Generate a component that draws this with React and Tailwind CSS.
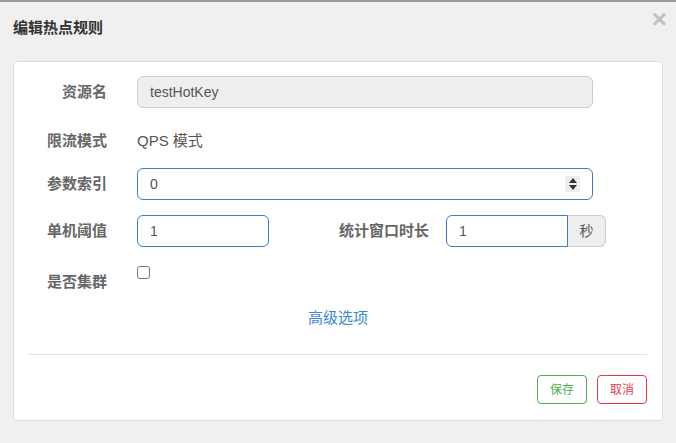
const font = {
  fontFamily: '"Liberation Sans", "Noto Sans CJK SC", sans-serif',
};

const Label = ({ children, className = "" }) => (
  <div
    className={`w-[93px] shrink-0 text-right text-[15px] font-bold text-[#666] ${className}`}
  >
    {children}
  </div>
);

export default function App() {
  return (
    <div
      style={font}
      className="h-[443px] w-[676px] overflow-hidden border-t-2 border-[#9a9a9a] bg-[#f0f0f0]"
    >
      {/* HEADER */}
      <div className="flex h-[59px] items-start justify-between pl-[13px] pr-[9px]">
        <h1 className="mt-[15px] text-[15px] font-bold text-[#333]">编辑热点规则</h1>
        <button className="mt-[4px] text-[26px] font-bold leading-none text-[#c2c2c2]">
          ×
        </button>
      </div>

      {/* BODY */}
      <div className="mx-[13px] h-[360px] rounded-[4px] border border-[#ddd] bg-white pt-[14px]">
        <div className="flex h-[32px] items-center">
          <Label>资源名</Label>
          <div className="ml-[30px] flex h-[32px] w-[456px] items-center rounded-[6px] border border-[#ccc] bg-[#eee] px-[12px] text-[14px] text-[#555]">
            testHotKey
          </div>
        </div>

        <div className="mt-[17px] flex h-[32px] items-center">
          <Label>限流模式</Label>
          <div className="ml-[30px] text-[15px] text-[#555]">QPS 模式</div>
        </div>

        <div className="mt-[11px] flex h-[32px] items-center">
          <Label>参数索引</Label>
          <div className="ml-[30px] flex h-[32px] w-[456px] items-center justify-between rounded-[6px] border border-[#3b7dc0] bg-white pl-[12px] pr-[12px] text-[14px] text-[#555]">
            <span>0</span>
            <span className="flex h-[16px] w-[15px] flex-col items-center justify-center gap-[2px] bg-[#eee]">
              <svg width="8" height="5" viewBox="0 0 8 5">
                <path d="M4 0L8 5H0z" fill="#333" />
              </svg>
              <svg width="8" height="5" viewBox="0 0 8 5">
                <path d="M0 0H8L4 5z" fill="#333" />
              </svg>
            </span>
          </div>
        </div>

        <div className="mt-[15px] flex h-[32px] items-center">
          <Label>单机阈值</Label>
          <div className="ml-[30px] flex h-[32px] w-[132px] items-center rounded-[6px] border border-[#3b7dc0] bg-white px-[12px] text-[14px] text-[#555]">
            1
          </div>
          <div className="ml-[70px] text-[15px] font-bold text-[#666]">统计窗口时长</div>
          <div className="ml-[17px] flex h-[32px]">
            <div className="flex w-[122px] items-center rounded-l-[6px] border border-[#3b7dc0] bg-white px-[12px] text-[14px] text-[#555]">
              1
            </div>
            <div className="flex w-[38px] items-center justify-center rounded-r-[6px] border border-l-0 border-[#ccc] bg-[#eee] text-[14px] text-[#555]">
              秒
            </div>
          </div>
        </div>

        <div className="mt-[17px] flex h-[32px] items-start">
          <Label className="mt-[7px]">是否集群</Label>
          <input
            type="checkbox"
            className="ml-[30px] mt-[2px] h-[13px] w-[13px] appearance-none rounded-[3px] border border-[#777] bg-white"
          />
        </div>

        <div className="mt-[12px] flex h-[20px] items-center justify-center">
          <a className="text-[15px] text-[#3a87cf]">高级选项</a>
        </div>

        <div className="mx-[15px] mt-[26px] border-t border-[#e1e1e1]" />

        <div className="mr-[15px] mt-[20px] flex justify-end gap-[10px]">
          <button className="h-[29px] w-[50px] rounded-[4px] border border-[#4cae4c] bg-white text-[12px] text-[#4cae4c]">
            保存
          </button>
          <button className="h-[29px] w-[50px] rounded-[4px] border border-[#e23b4b] bg-white text-[12px] text-[#e23b4b]">
            取消
          </button>
        </div>
      </div>
    </div>
  );
}
